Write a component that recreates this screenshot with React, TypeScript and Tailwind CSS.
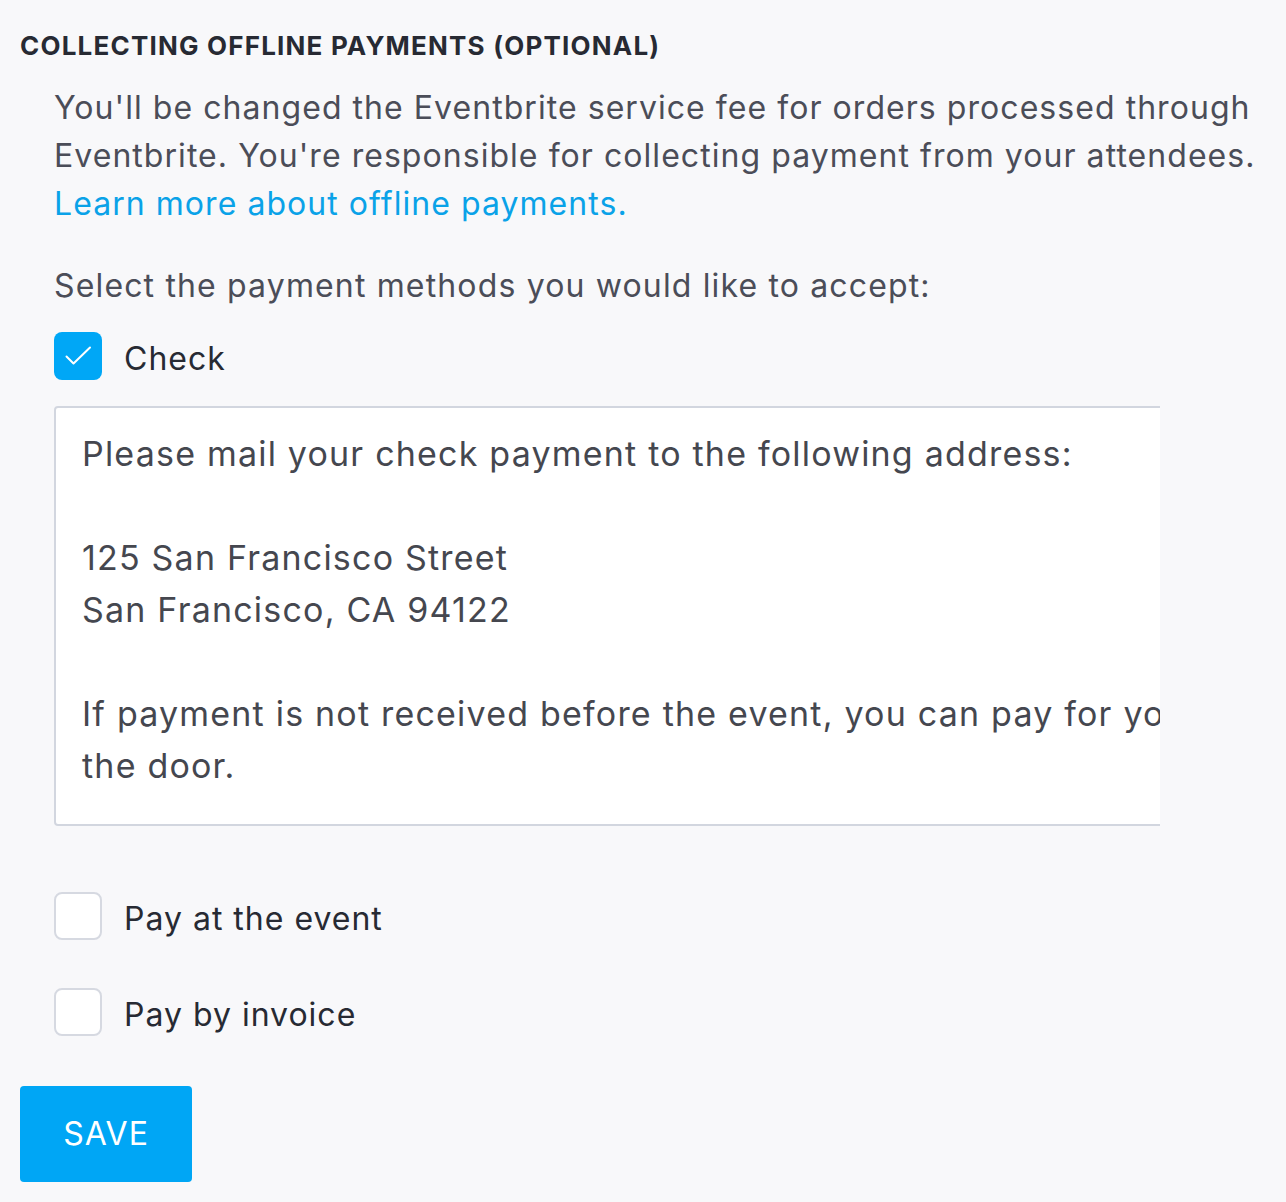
import React from 'react';

function Box({ checked }: { checked?: boolean }) {
  if (checked) {
    return (
      <span className="flex h-[48px] w-[48px] shrink-0 items-center justify-center rounded-[8px] bg-[#00a7f6]">
        <svg width="30" height="30" viewBox="0 0 30 30" fill="none">
          <path d="M3.5 15.5l7 7L27 6.5" stroke="white" strokeWidth="2" strokeLinecap="round" strokeLinejoin="round" />
        </svg>
      </span>
    );
  }
  return <span className="block h-[48px] w-[48px] shrink-0 rounded-[8px] border-2 border-[#d6d9e1] bg-white" />;
}

function Option({ label, checked }: { label: string; checked?: boolean }) {
  return (
    <label className="flex h-[48px] items-center gap-[22px]">
      <Box checked={checked} />
      <span className="h-[48px] pt-[6px] text-[32px] leading-[42px] tracking-[1px] text-[#272a33]">{label}</span>
    </label>
  );
}

export default function App() {
  return (
    <div className="min-h-[1202px] w-[1286px] bg-[#f8f8fa] font-['Inter',sans-serif]">
      <div className="pl-[20px] pt-[30px]">
        <h2 className="text-[26px] font-bold uppercase leading-[32px] tracking-[1.2px] text-[#272a33]">
          Collecting offline payments (optional)
        </h2>
        <div className="pl-[34px]">
          <p className="mt-[22px] text-[32px] leading-[48px] tracking-[1.05px] text-[#4b4d58]">
            You'll be changed the Eventbrite service fee for orders processed through Eventbrite. You're responsible for collecting payment from your attendees.
            <span className="block text-[#0aa2e8]">Learn more about offline payments.</span>
          </p>
          <p className="mt-[34px] text-[32px] leading-[48px] tracking-[1.15px] text-[#4b4d58]">
            Select the payment methods you would like to accept:
          </p>

          <div className="mt-[22px]">
            <Option label="Check" checked />
          </div>

          <div className="mt-[26px] w-[1106px] overflow-hidden">
            <div className="h-[420px] w-[1250px] rounded-[4px] border-2 border-[#d2d6df] bg-white pl-[26px] pt-[20px] text-[34px] leading-[52px] tracking-[1.2px] text-[#45474f]">
              <div className="whitespace-nowrap">Please mail your check payment to the following address:</div>
              <div className="h-[52px]" />
              <div className="whitespace-nowrap">125 San Francisco Street</div>
              <div className="whitespace-nowrap">San Francisco, CA 94122</div>
              <div className="h-[52px]" />
              <div className="whitespace-nowrap">If payment is not received before the event, you can pay for your tickets at</div>
              <div className="whitespace-nowrap">the door.</div>
            </div>
          </div>

          <div className="mt-[66px] flex flex-col gap-[48px]">
            <Option label="Pay at the event" />
            <Option label="Pay by invoice" />
          </div>
        </div>
        <button className="mt-[50px] h-[96px] w-[172px] rounded-[4px] bg-[#00a6f5] text-[32px] tracking-[1px] text-white">
          SAVE
        </button>
      </div>
    </div>
  );
}
